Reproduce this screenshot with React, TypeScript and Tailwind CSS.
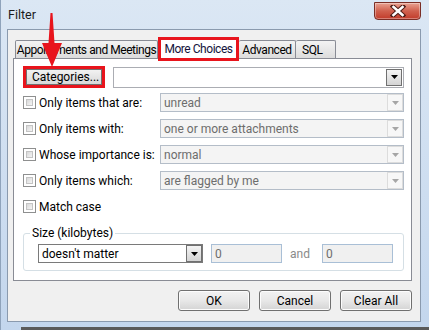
import React from "react";

const Arrow = ({ color = "#000" }: { color?: string }) => (
  <svg width="7" height="4" viewBox="0 0 7 4">
    <path d="M0 0h7L3.5 4z" fill={color} />
  </svg>
);

const Checkbox = () => (
  <div className="w-[13px] h-[13px] border border-[#8e8f8f] bg-white p-[2px] shrink-0">
    <div className="w-full h-full border border-[#c4c4c4] bg-gradient-to-br from-[#d9d9d9] to-[#f4f4f4]" />
  </div>
);

const DisabledCombo = ({ text }: { text: string }) => (
  <div className="ml-auto w-[244px] h-[19px] border border-[#b4bdc8] bg-[#f4f4f4] flex items-center">
    <span className="pl-[3px] text-[#6d6d6d] flex-1 leading-none">{text}</span>
    <div className="w-[16px] h-[17px] border border-[#dcdcdc] bg-[#f7f7f7] flex items-center justify-center mr-[0px]">
      <Arrow color="#a6a6a6" />
    </div>
  </div>
);

const Row = ({ label, value }: { label: string; value?: string }) => (
  <div className="h-[19px] flex items-center ml-[9px] mr-[7px]">
    <Checkbox />
    <span className="ml-[3px] leading-none">{label}</span>
    {value !== undefined && <DisabledCombo text={value} />}
  </div>
);

const Button = ({ children, w }: { children: React.ReactNode; w: string }) => (
  <div
    className={`${w} h-[21px] rounded-[3px] border border-[#707070] bg-gradient-to-b from-[#f2f2f2] via-[#e8e8e8] to-[#d4d4d4] flex items-center justify-center shadow-[inset_0_0_0_1px_#fcfcfc]`}
  >
    {children}
  </div>
);

export default function App() {
  return (
    <div className="w-[429px] h-[330px] relative overflow-hidden bg-gradient-to-b from-[#dbe7f4] to-[#c3d6ed] border-l border-[#8fa3bb] font-['Roboto',sans-serif] text-[12px] text-black whitespace-nowrap">
      {/* Title bar */}
      <div className="h-[29px] flex justify-between items-start">
        <div className="pl-[7px] pt-[7px] text-[12.5px] text-[#1b1b1b] leading-[16px]">Filter</div>
        <div className="mt-[2px] mr-[8px] w-[47px] h-[18px] rounded-b-[4px] border border-[#7a2e26] bg-gradient-to-b from-[#e8a292] via-[#d0604e] to-[#c13a2a] flex items-center justify-center shadow-[inset_0_0_0_1px_rgba(255,255,255,0.35)]">
          <svg width="16" height="12" viewBox="0 0 16 12">
            <path d="M3 1.5L13 10.5M13 1.5L3 10.5" stroke="#4a1a14" strokeWidth="4.5" strokeLinecap="square" />
            <path d="M3.5 2L12.5 10M12.5 2L3.5 10" stroke="#ffffff" strokeWidth="2.6" strokeLinecap="square" />
          </svg>
        </div>
      </div>

      {/* Client area */}
      <div className="ml-[6px] w-[414px] h-[293px] border border-[#8a9aae] bg-[#f0f0f0] flex flex-col">
        {/* Tabs */}
        <div className="mt-[7px] ml-[7px] h-[21px] flex items-start relative z-10 tracking-[-0.45px]">
          <div className="mt-[3px] w-[143px] h-[18px] border border-b-0 border-[#898c95] rounded-t-[2px] bg-gradient-to-b from-[#f3f3f3] to-[#dcdcdc] flex items-center justify-center leading-none">
            Appointments and Meetings
          </div>
          <div className="w-[81px] h-[24px] border-[3px] border-[#e8141c] bg-white flex items-center justify-center leading-none text-[#14143c]">
            More Choices
          </div>
          <div className="mt-[3px] w-[57px] h-[18px] border border-b-0 border-l-0 border-[#898c95] rounded-t-[2px] bg-gradient-to-b from-[#f3f3f3] to-[#dcdcdc] flex items-center justify-center leading-none">
            Advanced
          </div>
          <div className="mt-[3px] w-[40px] h-[18px] border border-b-0 border-l-0 border-[#898c95] rounded-t-[2px] bg-gradient-to-b from-[#f3f3f3] to-[#dcdcdc] flex items-center pl-[6px] leading-none">
            SQL
          </div>
        </div>

        {/* Panel */}
        <div className="ml-[5px] w-[399px] h-[223px] border border-[#898c95] bg-white flex flex-col">
          <div className="mt-[7px] ml-[9px] flex items-center">
            <div className="w-[82px] h-[22px] border-[3px] border-[#e8141c]">
              <div className="w-full h-full border border-[#707070] bg-gradient-to-b from-[#f2f2f2] to-[#d8d8d8] flex items-center pl-[5px] leading-none">
                Categories...
              </div>
            </div>
            <div className="ml-[8px] w-[291px] h-[21px] border border-[#abadb3] bg-white flex items-center justify-end pr-[1px]">
              <div className="w-[16px] h-[17px] border border-[#707070] bg-gradient-to-b from-[#f4f4f4] to-[#d4d4d4] flex items-center justify-center">
                <Arrow />
              </div>
            </div>
          </div>

          <div className="mt-[5px] flex flex-col gap-[7px]">
            <Row label="Only items that are:" value="unread" />
            <Row label="Only items with:" value="one or more attachments" />
            <Row label="Whose importance is:" value="normal" />
            <Row label="Only items which:" value="are flagged by me" />
            <Row label="Match case" />
          </div>

          <fieldset className="mt-[9px] ml-[9px] w-[381px] border border-[#d5dfe5] rounded-[3px] pl-[14px] pt-[3px] pb-[7px]">
            <legend className="ml-[-8px] px-[2px] leading-[16px]">Size (kilobytes)</legend>
            <div className="flex items-center">
              <div className="w-[165px] h-[19px] border border-[#7a7a7a] bg-white flex items-center">
                <span className="pl-[3px] flex-1 leading-none">doesn't matter</span>
                <div className="w-[16px] h-[17px] border border-[#707070] bg-gradient-to-b from-[#f4f4f4] to-[#d4d4d4] flex items-center justify-center">
                  <Arrow />
                </div>
              </div>
              <div className="ml-[8px] w-[71px] h-[19px] border border-[#a9bfd6] bg-[#f0f0f0] flex items-center pl-[3px] text-[#6d6d6d] leading-none">
                0
              </div>
              <span className="ml-[8px] w-[17px] text-[#8a8a8a] leading-none">and</span>
              <div className="ml-[15px] w-[71px] h-[19px] border border-[#a9bfd6] bg-[#f0f0f0] flex items-center pl-[3px] text-[#6d6d6d] leading-none">
                0
              </div>
            </div>
          </fieldset>
        </div>

        {/* Buttons */}
        <div className="mt-[9px] pr-[8px] flex justify-end gap-[9px]">
          <Button w="w-[72px]">OK</Button>
          <Button w="w-[72px]">Cancel</Button>
          <Button w="w-[72px]">Clear All</Button>
        </div>
      </div>

      {/* bottom shadow */}
      <div className="absolute left-[20px] right-0 bottom-0 h-[3px] bg-[#5a5a5a]" />

      {/* Red annotation arrow */}
      <svg className="absolute left-[39px] top-[12px] z-20" width="24" height="58" viewBox="0 0 24 58">
        <path d="M10.5 1 L12.5 1 L14.5 31 L22 31 L12 55 L2 31 L8.5 31 Z" fill="#e8141c" />
      </svg>
    </div>
  );
}
